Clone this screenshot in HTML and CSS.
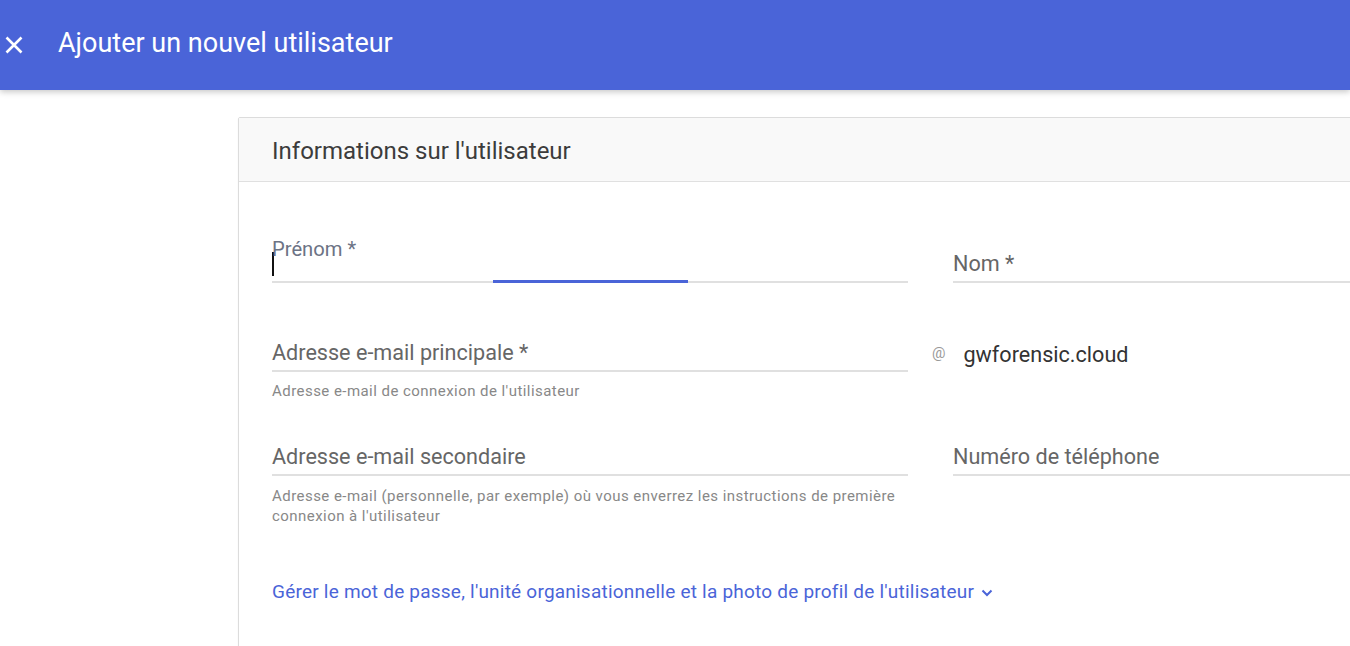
FILE: index.html
```html
<!DOCTYPE html>
<html lang="fr">
<head>
<meta charset="utf-8">
<title>Ajouter un nouvel utilisateur</title>
<link rel="stylesheet" href="styles.css">
</head>
<body>
<header class="topbar">
  <button class="close" aria-label="Fermer">
    <svg width="18" height="18" viewBox="0 0 18 18"><path d="M1.5 1.5 L16.5 16.5 M16.5 1.5 L1.5 16.5" stroke="#fff" stroke-width="2.6" fill="none"/></svg>
  </button>
  <h1 class="topbar-title">Ajouter un nouvel utilisateur</h1>
</header>
<main class="page">
  <section class="card">
    <div class="card-head">Informations sur l'utilisateur</div>
    <div class="card-body">
      <div class="grid">
        <div class="field focused">
          <span class="float-label">Prénom *</span>
          <div class="input"><span class="caret"></span></div>
          <span class="ink"></span>
        </div>
        <div class="field">
          <div class="input">Nom *</div>
        </div>

        <div class="cell">
          <div class="field">
            <div class="input">Adresse e-mail principale *</div>
          </div>
          <p class="hint hint1">Adresse e-mail de connexion de l'utilisateur</p>
        </div>
        <div class="domain">
          <span class="at">@</span>
          <span class="domain-name">gwforensic.cloud</span>
        </div>

        <div class="cell">
          <div class="field">
            <div class="input">Adresse e-mail secondaire</div>
          </div>
          <p class="hint hint2">Adresse e-mail (personnelle, par exemple) où vous enverrez les instructions de première connexion à l'utilisateur</p>
        </div>
        <div class="cell">
          <div class="field">
            <div class="input">Numéro de téléphone</div>
          </div>
        </div>
      </div>
      <a class="more" href="#">Gérer le mot de passe, l'unité organisationnelle et la photo de profil de l'utilisateur
        <svg width="12" height="8" viewBox="0 0 12 8"><path d="M1.5 1.5 L6 6 L10.5 1.5" stroke="#4a64d8" stroke-width="2" fill="none"/></svg>
      </a>
    </div>
  </section>
</main>
</body>
</html>
```
FILE: styles.css
```css
* { box-sizing: border-box; }
html, body { margin: 0; padding: 0; }
body {
  font-family: Roboto, "Liberation Sans", Arial, sans-serif;
  background: #fff;
  width: 1350px;
  height: 646px;
  overflow: hidden;
}
.topbar {
  height: 90px;
  background: #4a64d8;
  display: flex;
  align-items: center;
  box-shadow: 0 2px 6px rgba(0,0,0,0.22);
  position: relative;
  z-index: 2;
}
.close {
  background: none;
  border: 0;
  padding: 0;
  margin: 0 0 0 5px;
  width: 18px;
  height: 18px;
  display: flex;
}
.topbar-title {
  margin: 0 0 0 35px;
  color: #fff;
  font-weight: 400;
  font-size: 27px;
  line-height: 32px;
  position: relative;
  top: -2px;
}
.page {
  padding: 27px 0 0 238px;
}
.card {
  width: 1200px;
  height: 560px;
  border: 1px solid #dcdcdc;
  border-radius: 2px;
  box-shadow: 0 1px 2px rgba(0,0,0,0.06);
  background: #fff;
}
.card-head {
  height: 64px;
  background: #f9f9f9;
  border-bottom: 1px solid #e0e0e0;
  padding: 2px 0 0 33px;
  font-size: 24px;
  line-height: 62px;
  color: #3c3c3c;
}
.card-body {
  padding: 70px 0 0 33px;
}
.grid {
  display: grid;
  grid-template-columns: 636px 397px;
  column-gap: 45px;
  row-gap: 0;
}
.field {
  position: relative;
  border-bottom: 2px solid #e0e0e0;
  padding-bottom: 5px;
}
.input {
  font-size: 21.6px;
  line-height: 24px;
  height: 24px;
  color: #666;
}
.float-label {
  position: absolute;
  left: 0;
  top: -15px;
  font-size: 20.2px;
  line-height: 24px;
  color: #6c7385;
}
.caret {
  display: inline-block;
  width: 2px;
  height: 24px;
  background: #111;
  vertical-align: top;
}
.ink {
  position: absolute;
  left: 221px;
  width: 195px;
  bottom: -2px;
  height: 3px;
  background: #4a64d8;
}
.cell { margin-top: 58px; }
.grid > .cell:nth-child(5),
.grid > .cell:nth-child(6) { margin-top: 44px; }
.hint {
  margin: 9px 0 0;
  font-size: 15px;
  letter-spacing: 0.45px;
  line-height: 20px;
  color: #888;
}
.hint2 { margin-top: 10px; }
.domain {
  margin-top: 58px;
  display: flex;
  align-items: flex-start;
  margin-left: -21px;
}
.at {
  font-size: 15px;
  line-height: 24px;
  color: #999;
  margin-top: 0;
}
.domain-name {
  margin-left: 18px;
  font-size: 21.6px;
  line-height: 24px;
  color: #333;
  margin-top: 2px;
}
.more {
  display: inline-flex;
  align-items: center;
  gap: 7px;
  margin-top: 54px;
  font-size: 19px;
  letter-spacing: 0.22px;
  line-height: 24px;
  color: #4a64d8;
  text-decoration: none;
}
.more svg { margin-top: 2px; }
```
